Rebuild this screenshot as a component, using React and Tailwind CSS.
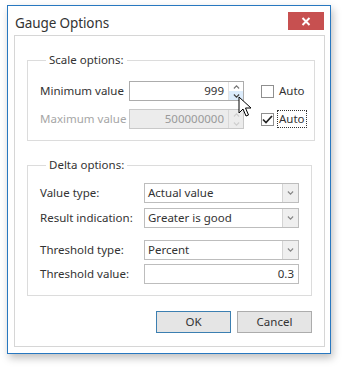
import React from 'react';

const font = { fontFamily: '"Segoe UI", "Noto Sans", "Open Sans", sans-serif' };

const Chevron = ({ className = '' }) => (
  <svg width="9" height="6" viewBox="0 0 9 6" className={className}>
    <path d="M1 1 L4.5 4.5 L8 1" fill="none" stroke="currentColor" strokeWidth="1.6" />
  </svg>
);

const Spin = ({ disabled, hot }) => (
  <div className={`flex flex-col w-[15px] h-full border-l ${disabled ? 'border-[#d8d8d8]' : 'border-[#e3e3e3]'}`}>
    <div className={`flex-1 flex items-center justify-center ${disabled ? 'text-[#cfcfcf]' : 'text-[#777]'}`}>
      <Chevron className="rotate-180 scale-75" />
    </div>
    <div className={`flex-1 flex items-center justify-center ${hot ? 'bg-[#dcecfc]' : ''} ${disabled ? 'text-[#cfcfcf]' : 'text-[#444]'}`}>
      <Chevron className="scale-75" />
    </div>
  </div>
);

const Check = ({ checked, label, focus }) => (
  <div className="flex items-center gap-[4px]">
    <div className="w-[13px] h-[13px] border border-[#8f8f8f] bg-white flex items-center justify-center">
      {checked && (
        <svg width="11" height="9" viewBox="0 0 11 9">
          <path d="M1 4.5 L4 7.5 L10 1" fill="none" stroke="#222" strokeWidth="1.7" />
        </svg>
      )}
    </div>
    <span className={`px-[1px] leading-[16px] ${focus ? 'outline outline-1 outline-dotted outline-[#333]' : 'outline outline-1 outline-transparent'}`}>{label}</span>
  </div>
);

const Combo = ({ value }) => (
  <div className="flex w-[155px] h-[20px] border border-[#bdbdbd] bg-white">
    <div className="flex-1 px-[3px] leading-[18px]">{value}</div>
    <div className="w-[16px] bg-[#efefef] border-l border-[#d4d4d4] flex items-center justify-center text-[#888]">
      <Chevron className="scale-75" />
    </div>
  </div>
);

const Row = ({ label, children, labelWidth = 'w-[104px]', className = '' }) => (
  <div className={`flex items-center ${className}`}>
    <div className={labelWidth}>{label}</div>
    {children}
  </div>
);

export default function App() {
  return (
    <div className="w-[345px] h-[369px] bg-white pl-[7px] pt-[5px] text-[11.5px] text-[#333]" style={font}>
      <div className="w-[324px] h-[349px] border border-[#2878c0] bg-white shadow-[2px_4px_8px_rgba(0,0,0,0.25)] flex flex-col">
        <div className="h-[29px] flex items-start justify-between pl-[7px] pr-[6px]">
          <div className="text-[13.5px] tracking-[-0.1px] text-[#333] leading-[20px] mt-[7px]">Gauge Options</div>
          <div className="w-[36px] h-[18px] mt-[6px] bg-[#c75050] flex items-center justify-center">
            <svg width="10" height="9" viewBox="0 0 10 9">
              <path d="M1.5 1 L8.5 8 M8.5 1 L1.5 8" stroke="white" strokeWidth="2" />
            </svg>
          </div>
        </div>
        <div className="ml-[6px] mr-[5px] h-[312px] border border-[#d6d6d6] bg-white px-[12px] pt-[16px] flex flex-col">
          <fieldset className="border border-[#dcdcdc] h-[89px] pl-[12px] pr-[8px]">
            <legend className="ml-[6px] px-[3px] leading-[16px]">Scale options:</legend>
            <Row label="Minimum value" labelWidth="w-[89px]" className="mt-[13px]">
              <div className="w-[115px] h-[20px] border border-[#acacac] flex bg-white">
                <div className="flex-1 text-right pr-[4px] leading-[18px]">999</div>
                <Spin hot />
              </div>
              <div className="ml-[17px]"><Check label="Auto" /></div>
            </Row>
            <Row label={<span className="text-[#a6a6a6]">Maximum value</span>} labelWidth="w-[89px]" className="mt-[8px]">
              <div className="w-[115px] h-[20px] border border-[#c9c9c9] flex bg-[#ececec]">
                <div className="flex-1 text-right pr-[4px] leading-[18px] text-[#9a9a9a]">500000000</div>
                <Spin disabled />
              </div>
              <div className="ml-[17px]"><Check checked focus label="Auto" /></div>
            </Row>
          </fieldset>
          <fieldset className="border border-[#dcdcdc] h-[139px] mt-[16px] pl-[12px] pr-[8px]">
            <legend className="ml-[6px] px-[3px] leading-[16px]">Delta options:</legend>
            <Row label="Value type:" className="mt-[10px]"><Combo value="Actual value" /></Row>
            <Row label="Result indication:" className="mt-[5px]"><Combo value="Greater is good" /></Row>
            <Row label="Threshold type:" className="mt-[12px]"><Combo value="Percent" /></Row>
            <Row label="Threshold value:" className="mt-[4px]">
              <div className="w-[155px] h-[20px] border border-[#bdbdbd] bg-white text-right pr-[4px] leading-[18px]">0.3</div>
            </Row>
          </fieldset>
          <div className="flex justify-end gap-[6px] mt-[15px]">
            <button className="w-[75px] h-[22px] border border-[#3c7fb1] bg-[#e5e5e5] leading-[20px]">OK</button>
            <button className="w-[75px] h-[22px] border border-[#acacac] bg-[#e5e5e5] leading-[20px]">Cancel</button>
          </div>
        </div>
      </div>
      <svg className="absolute left-[238px] top-[96px]" width="14" height="22" viewBox="0 0 14 22">
        <path d="M1 1 L1 17 L5 13 L8 20 L10.5 19 L7.5 12 L13 12 Z" fill="white" stroke="black" strokeWidth="1" strokeLinejoin="round" />
      </svg>
    </div>
  );
}
